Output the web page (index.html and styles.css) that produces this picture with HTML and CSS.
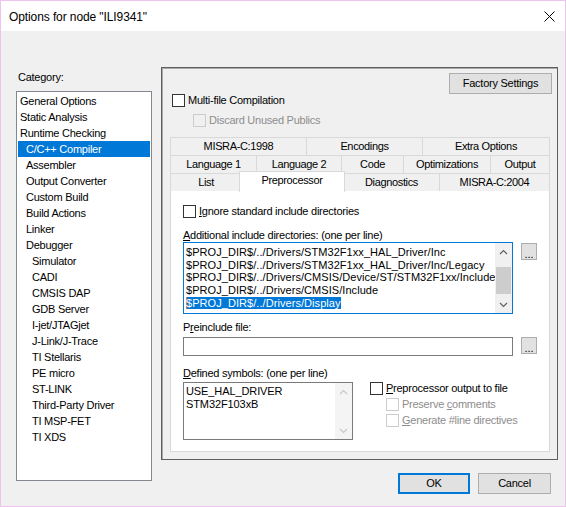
FILE: index.html
```html
<!DOCTYPE html>
<html lang="en">
<head>
    <meta charset="UTF-8">
    <title>Options for node "ILI9341"</title>
    <link rel="stylesheet" href="styles.css">
</head>
<body>
<div class="window">
    <div class="titlebar">
        <span class="title">Options for node "ILI9341"</span>
        <svg class="close" width="11" height="11" viewBox="0 0 11 11">
            <path d="M0.5 0.5 L10.5 10.5 M10.5 0.5 L0.5 10.5" stroke="#000" stroke-width="1" fill="none"/>
        </svg>
    </div>

    <div class="client">
        <div class="category">
            <div class="cat-label">Category:</div>
            <ul class="tree">
                <li>General Options</li>
                <li>Static Analysis</li>
                <li>Runtime Checking</li>
                <li class="lvl1 sel">C/C++ Compiler</li>
                <li class="lvl1">Assembler</li>
                <li class="lvl1">Output Converter</li>
                <li class="lvl1">Custom Build</li>
                <li class="lvl1">Build Actions</li>
                <li class="lvl1">Linker</li>
                <li class="lvl1">Debugger</li>
                <li class="lvl2">Simulator</li>
                <li class="lvl2">CADI</li>
                <li class="lvl2">CMSIS DAP</li>
                <li class="lvl2">GDB Server</li>
                <li class="lvl2">I-jet/JTAGjet</li>
                <li class="lvl2">J-Link/J-Trace</li>
                <li class="lvl2">TI Stellaris</li>
                <li class="lvl2">PE micro</li>
                <li class="lvl2">ST-LINK</li>
                <li class="lvl2">Third-Party Driver</li>
                <li class="lvl2">TI MSP-FET</li>
                <li class="lvl2">TI XDS</li>
            </ul>
        </div>

        <div class="main">
            <div class="frame">
                <div class="factory-row">
                    <div class="btn factory">Factory Settings</div>
                </div>
                <div class="check multi"><span class="box"></span>Multi-file Compilation</div>
                <div class="check disabled discard"><span class="box"></span>Discard Unused Publics</div>

                <div class="tabs">
                    <div class="tabrow r1">
                        <div class="tab">MISRA-C:1998</div>
                        <div class="tab">Encodings</div>
                        <div class="tab">Extra Options</div>
                    </div>
                    <div class="tabrow r2">
                        <div class="tab">Language 1</div>
                        <div class="tab">Language 2</div>
                        <div class="tab">Code</div>
                        <div class="tab">Optimizations</div>
                        <div class="tab">Output</div>
                    </div>
                    <div class="tabrow r3">
                        <div class="tab">List</div>
                        <div class="tab active">Preprocessor</div>
                        <div class="tab">Diagnostics</div>
                        <div class="tab">MISRA-C:2004</div>
                    </div>
                </div>

                <div class="page">
                    <div class="check ignore"><span class="box"></span><span><u>I</u>gnore standard include directories</span></div>

                    <div class="field-label inc-label"><u>A</u>dditional include directories: (one per line)</div>
                    <div class="field-row">
                        <div class="listbox focused">
                            <div class="lines">
                                <div>$PROJ_DIR$/../Drivers/STM32F1xx_HAL_Driver/Inc</div>
                                <div>$PROJ_DIR$/../Drivers/STM32F1xx_HAL_Driver/Inc/Legacy</div>
                                <div>$PROJ_DIR$/../Drivers/CMSIS/Device/ST/STM32F1xx/Include</div>
                                <div>$PROJ_DIR$/../Drivers/CMSIS/Include</div>
                                <div><span class="hl">$PROJ_DIR$/../Drivers/Display</span></div>
                            </div>
                            <div class="vscroll">
                                <div class="arrow">
                                    <svg width="9" height="6" viewBox="0 0 9 6"><polyline points="1,5 4.5,1.5 8,5" fill="none" stroke="#606060" stroke-width="1.2"/></svg>
                                </div>
                                <div class="track"><div class="thumb"></div></div>
                                <div class="arrow">
                                    <svg width="9" height="6" viewBox="0 0 9 6"><polyline points="1,1 4.5,4.5 8,1" fill="none" stroke="#606060" stroke-width="1.2"/></svg>
                                </div>
                            </div>
                        </div>
                        <div class="btn dots">...</div>
                    </div>

                    <div class="field-label pre-label">P<u>r</u>einclude file:</div>
                    <div class="field-row">
                        <div class="edit"></div>
                        <div class="btn dots">...</div>
                    </div>

                    <div class="field-label def-label"><u>D</u>efined symbols: (one per line)</div>
                    <div class="def-row">
                        <div class="listbox symbols">
                            <div class="lines">
                                <div>USE_HAL_DRIVER</div>
                                <div>STM32F103xB</div>
                            </div>
                            <div class="vscroll off">
                                <div class="arrow">
                                    <svg width="9" height="6" viewBox="0 0 9 6"><polyline points="1,5 4.5,1.5 8,5" fill="none" stroke="#c8c8c8" stroke-width="1.2"/></svg>
                                </div>
                                <div class="track"></div>
                                <div class="arrow">
                                    <svg width="9" height="6" viewBox="0 0 9 6"><polyline points="1,1 4.5,4.5 8,1" fill="none" stroke="#c8c8c8" stroke-width="1.2"/></svg>
                                </div>
                            </div>
                        </div>
                        <div class="pp-options">
                            <div class="check"><span class="box"></span><span><u>P</u>reprocessor output to file</span></div>
                            <div class="check disabled sub"><span class="box"></span><span>Preserve <u>c</u>omments</span></div>
                            <div class="check disabled sub"><span class="box"></span><span><u>G</u>enerate #line directives</span></div>
                        </div>
                    </div>
                </div>
            </div>

            <div class="actions">
                <div class="btn ok">OK</div>
                <div class="btn cancel">Cancel</div>
            </div>
        </div>
    </div>
</div>
</body>
</html>
```

FILE: styles.css
```css
body {
    margin: 0;
    font-family: "Liberation Sans", Arial, sans-serif;
    font-size: 11px;
    letter-spacing: -0.25px;
    color: #000;
}
u {
    text-decoration: underline;
    text-underline-offset: 1px;
}
.window {
    width: 566px;
    height: 507px;
    box-sizing: border-box;
    border: 1px solid #eec4ee;
    background: #f0f0f0;
}
.titlebar {
    height: 30px;
    background: #fff;
    display: flex;
    align-items: center;
    justify-content: space-between;
    padding-left: 8px;
    padding-right: 10px;
}
.title {
    font-size: 12px;
    letter-spacing: -0.1px;
    margin-top: 1px;
}
.close {
    display: block;
}

.client {
    display: flex;
    padding-left: 15px;
}
.category {
    width: 136px;
    padding-top: 39px;
}
.cat-label {
    line-height: 14px;
    height: 14px;
    padding-left: 2px;
    margin-bottom: 7px;
}
.tree {
    list-style: none;
    margin: 0;
    padding: 1px 1px;
    height: 390px;
    box-sizing: border-box;
    border: 1px solid #828790;
    background: #fff;
}
.tree li {
    height: 16px;
    line-height: 16px;
    padding-left: 2px;
    white-space: nowrap;
}
.tree li.lvl1 {
    padding-left: 8px;
}
.tree li.lvl2 {
    padding-left: 14px;
}
.tree li.sel {
    background: #0078d7;
    color: #fff;
}

.main {
    margin-left: 9px;
    padding-top: 36px;
}
.frame {
    width: 397px;
    height: 393px;
    box-sizing: border-box;
    border: 1px solid #5f5f5f;
    box-shadow: inset 1px 1px 0 #a8a8a8;
    padding: 5px 5px 0 0;
}
.factory-row {
    display: flex;
    justify-content: flex-end;
}
.btn {
    box-sizing: border-box;
    background: #e1e1e1;
    border: 1px solid #adadad;
    text-align: center;
}
.factory {
    width: 103px;
    height: 21px;
    line-height: 19px;
}

.check {
    display: flex;
    align-items: center;
    gap: 3px;
    height: 13px;
    line-height: 13px;
    white-space: nowrap;
}
.box {
    width: 13px;
    height: 13px;
    box-sizing: border-box;
    border: 1px solid #333;
    background: #fff;
    flex: none;
}
.check.disabled {
    color: #8d8d8d;
}
.check.disabled .box {
    border-color: #cccccc;
    background: transparent;
}
.multi {
    margin-left: 10px;
}
.discard {
    margin-top: 7px;
    margin-left: 31px;
}

.tabs {
    margin: 10px 0 0 8px;
    width: 380px;
}
.tabrow {
    display: grid;
    border-right: 1px solid #d9d9d9;
    height: 18px;
}
.r1 {
    grid-template-columns: 136px 116px 1fr;
}
.r2 {
    grid-template-columns: 86px 85px 62px 87px 1fr;
}
.r3 {
    grid-template-columns: 71px 102px 96px 1fr;
    height: 17px;
}
.tab {
    box-sizing: border-box;
    border-left: 1px solid #d9d9d9;
    border-top: 1px solid #d9d9d9;
    background: #f0f0f0;
    text-align: center;
    line-height: 17px;
    letter-spacing: -0.35px;
    white-space: nowrap;
}
.tab.active {
    position: relative;
    z-index: 1;
    margin: -2px -2px -1px -2px;
    background: #fff;
    border-right: 1px solid #d9d9d9;
    line-height: 17px;
}

.page {
    width: 380px;
    height: 262px;
    box-sizing: border-box;
    margin-left: 8px;
    border: 1px solid #d9d9d9;
    background: #fff;
    padding: 14px 0 0 12px;
}
.field-label {
    line-height: 13px;
    height: 13px;
    white-space: nowrap;
}
.inc-label {
    margin-top: 11px;
}
.pre-label {
    margin-top: 7px;
}
.def-label {
    margin-top: 11px;
}
.field-row {
    display: flex;
    align-items: flex-start;
    gap: 8px;
}
.pre-label + .field-row {
    margin-top: 2px;
}
.dots {
    width: 16px;
    height: 17px;
    margin-top: 1px;
    line-height: 20px;
    letter-spacing: 0;
}

.listbox {
    display: flex;
    box-sizing: border-box;
    border: 1px solid #7a7a7a;
    background: #fff;
}
.listbox.focused {
    width: 330px;
    height: 72px;
    border-color: #0078d7;
}
.lines {
    flex: 1;
    overflow: hidden;
    padding: 3px 0 0 2px;
    line-height: 12.67px;
    white-space: nowrap;
    letter-spacing: 0.06px;
}
.hl {
    background: #0078d7;
    color: #fff;
    box-shadow: inset 1px 0 0 #e8731c;
}
.vscroll {
    width: 17px;
    flex: none;
    display: flex;
    flex-direction: column;
    background: #f0f0f0;
}
.arrow {
    height: 17px;
    display: flex;
    align-items: center;
    justify-content: center;
}
.track {
    flex: 1;
}
.thumb {
    margin: 7px 1px 0 1px;
    height: 27px;
    background: #cdcdcd;
}

.edit {
    width: 330px;
    height: 19px;
    box-sizing: border-box;
    border: 1px solid #7a7a7a;
    background: #fff;
    margin-top: 1px;
}

.def-row {
    display: flex;
    margin-top: 2px;
}
.listbox.symbols {
    width: 170px;
    height: 58px;
}
.symbols .lines {
    padding-top: 2px;
    letter-spacing: -0.1px;
}
.vscroll.off {
    background: #f4f4f4;
}
.pp-options {
    margin-left: 17px;
}
.pp-options .sub {
    margin-top: 3px;
    margin-left: 16px;
}

.actions {
    display: flex;
    justify-content: flex-end;
    gap: 8px;
    margin-top: 13px;
    padding-right: 7px;
}
.actions .btn {
    height: 21px;
    line-height: 19px;
}
.ok {
    width: 72px;
    border: 2px solid #0078d7;
    line-height: 17px !important;
}
.cancel {
    width: 73px;
}
```
